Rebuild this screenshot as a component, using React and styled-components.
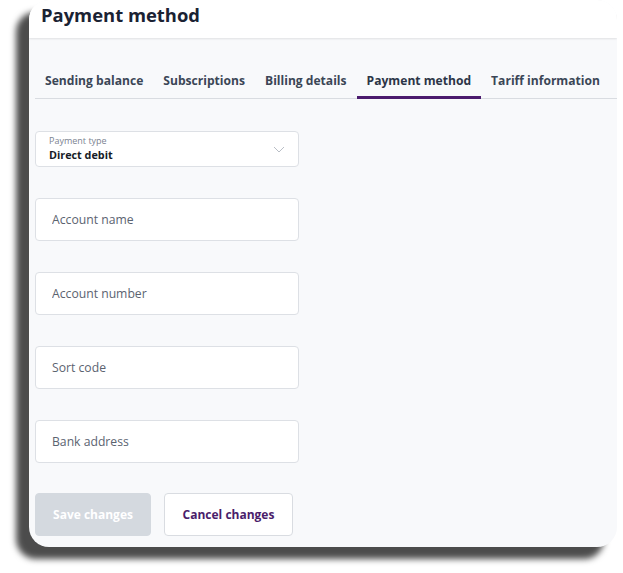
import React from 'react'
import styled, { createGlobalStyle } from 'styled-components'

const GlobalStyle = createGlobalStyle`
  * { box-sizing: border-box; }
  html, body {
    margin: 0;
    padding: 0;
    background: #ffffff;
    font-family: "Open Sans", "Noto Sans", sans-serif;
  }
`

const Page = styled.div`
  width: 623px;
  height: 573px;
  padding-left: 29px;
  overflow: hidden;
`

const Card = styled.div`
  width: 588px;
  height: 547px;
  border-radius: 20px;
  overflow: hidden;
  background: #f8f9fb;
  box-shadow: -13px 12px 6px rgba(0, 0, 0, 0.7);
  display: flex;
  flex-direction: column;
`

const Header = styled.header`
  height: 38px;
  flex-shrink: 0;
  background: #ffffff;
  padding-left: 12px;
  font-size: 18.4px;
  font-weight: 700;
  line-height: 30px;
  color: #1a2233;
  box-shadow: 0 1px 2px rgba(0, 0, 0, 0.1);
  position: relative;
  z-index: 1;
`

const Body = styled.main`
  flex: 1;
  padding: 24px 0 0 6px;
`

const TabBar = styled.nav`
  display: flex;
  border-bottom: 1px solid #d9dce1;
`

const Tab = styled.div`
  height: 37px;
  padding: 3px 10px 0;
  flex-shrink: 0;
  white-space: nowrap;
  display: flex;
  align-items: center;
  font-size: 12.1px;
  font-weight: 700;
  color: ${p => (p.$active ? '#2c3547' : '#3b4656')};
  border-bottom: 3px solid ${p => (p.$active ? '#4b1b6e' : 'transparent')};
  margin-bottom: -1px;
`

const Form = styled.form`
  width: 264px;
  margin-top: 32px;
  display: flex;
  flex-direction: column;
  gap: 31px;
`

const SelectBox = styled.div`
  height: 36px;
  background: #ffffff;
  border: 1px solid #dde0e5;
  border-radius: 4px;
  padding: 0 13px 0;
  display: flex;
  align-items: center;
  justify-content: space-between;
`

const SelectText = styled.div`
  display: flex;
  flex-direction: column;
`

const SelectLabel = styled.span`
  font-size: 9px;
  line-height: 12px;
  color: #7b8391;
`

const SelectValue = styled.span`
  font-size: 10.8px;
  font-weight: 700;
  line-height: 16px;
  color: #161b26;
`

const Input = styled.input`
  height: 43px;
  width: 100%;
  background: #ffffff;
  border: 1px solid #dde0e5;
  border-radius: 4px;
  padding: 0 16px;
  font-family: inherit;
  font-size: 12.2px;
  color: #1a2233;
  outline: none;

  &::placeholder {
    color: #5b6370;
  }
`

const Actions = styled.div`
  display: flex;
  gap: 13px;
  margin-top: 30px;
`

const Button = styled.button`
  height: 43px;
  width: ${p => p.$w}px;
  border-radius: 4px;
  font-family: inherit;
  font-size: 12px;
  font-weight: 700;
  cursor: pointer;
  background: ${p => (p.$primary ? '#d4d9df' : '#ffffff')};
  color: ${p => (p.$primary ? '#ffffff' : '#4a1d6b')};
  border: 1px solid ${p => (p.$primary ? '#d4d9df' : '#d9dce1')};
`

const Chevron = () => (
  <svg width="12" height="7" viewBox="0 0 12 7" fill="none">
    <path d="M1 1l5 5 5-5" stroke="#b9bec6" strokeWidth="1" />
  </svg>
)

const tabs = [
  { label: 'Sending balance' },
  { label: 'Subscriptions' },
  { label: 'Billing details' },
  { label: 'Payment method', active: true },
  { label: 'Tariff information' },
]

const fields = ['Account name', 'Account number', 'Sort code', 'Bank address']

export default function App() {
  return (
    <Page>
      <GlobalStyle />
      <Card>
        <Header>Payment method</Header>
        <Body>
          <TabBar>
            {tabs.map(t => (
              <Tab key={t.label} $active={t.active}>
                {t.label}
              </Tab>
            ))}
          </TabBar>
          <Form onSubmit={e => e.preventDefault()}>
            <SelectBox>
              <SelectText>
                <SelectLabel>Payment type</SelectLabel>
                <SelectValue>Direct debit</SelectValue>
              </SelectText>
              <Chevron />
            </SelectBox>
            {fields.map(f => (
              <Input key={f} placeholder={f} />
            ))}
          </Form>
          <Actions>
            <Button $primary $w={116}>Save changes</Button>
            <Button $w={129}>Cancel changes</Button>
          </Actions>
        </Body>
      </Card>
    </Page>
  )
}
